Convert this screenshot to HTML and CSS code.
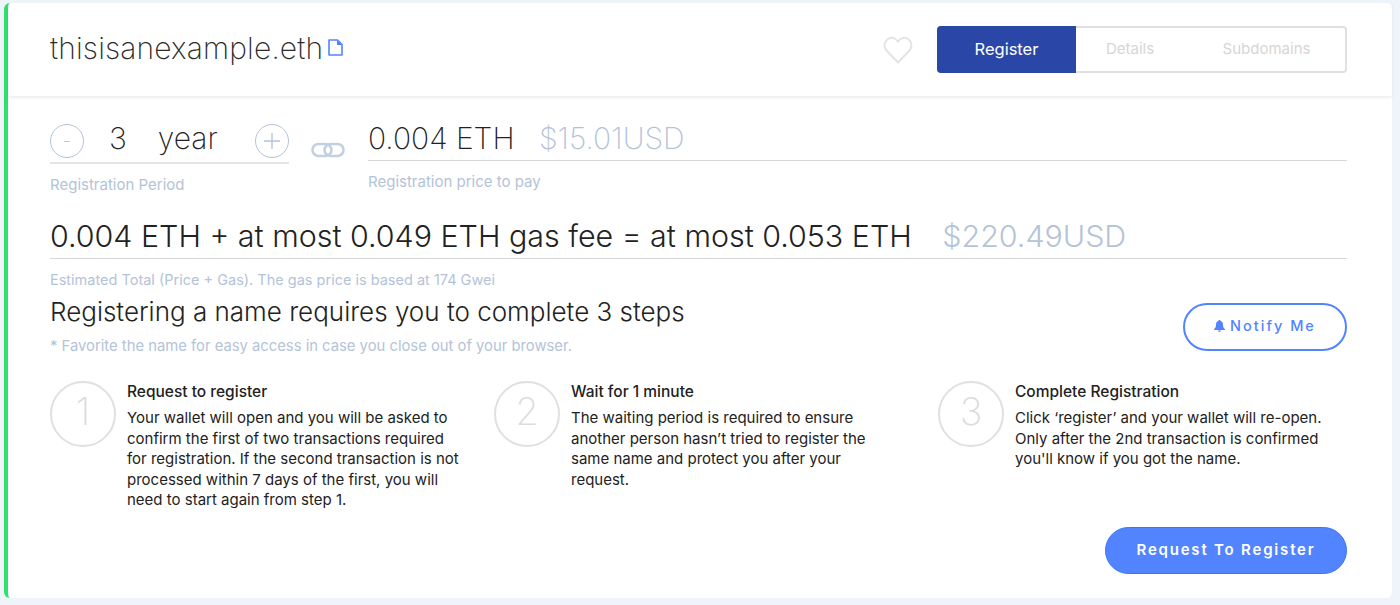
FILE: index.html
```html
<!DOCTYPE html>
<html lang="en">
<head>
    <meta charset="UTF-8">
    <meta name="viewport" content="width=device-width, initial-scale=1.0">
    <title>thisisanexample.eth</title>
    <link rel="stylesheet" href="styles.css">
</head>
<body>
    <div class="card">
        <!-- HEADER -->
        <div class="header">
            <h1 class="name">thisisanexample.eth</h1>
            <svg class="copy-icon" width="15" height="17" viewBox="0 0 15 17">
                <path d="M1 1H9.5L14 5.5V16H1Z" fill="none" stroke="#5284ff" stroke-width="1.6" stroke-linejoin="round"/>
                <path d="M9 1V6H14Z" fill="#5284ff"/>
            </svg>
            <svg class="heart-icon" width="30" height="28" viewBox="0 0 30 28">
                <path d="M15 26.5L3.5 14.5C0.5 11 1 6 4.5 3.2C8 0.8 12.5 1.6 15 5.6C17.5 1.6 22 0.8 25.5 3.2C29 6 29.5 11 26.5 14.5Z" fill="none" stroke="#e4e4e4" stroke-width="2" stroke-linejoin="round"/>
            </svg>
            <div class="tabs">
                <div class="tab active">Register</div>
                <div class="tab details">Details</div>
                <div class="tab subdomains">Subdomains</div>
            </div>
        </div>

        <div class="content">
            <!-- PERIOD AND PRICE -->
            <div class="price-row">
                <div class="period">
                    <div class="period-input">
                        <div class="round-btn minus">-</div>
                        <div class="years">3</div>
                        <div class="unit">year</div>
                        <div class="round-btn plus">
                            <svg width="18" height="18" viewBox="0 0 18 18"><path d="M9 1V17M1 9H17" stroke="#b4c3d8" stroke-width="1.3" fill="none"/></svg>
                        </div>
                    </div>
                    <div class="label">Registration Period</div>
                </div>
                <svg class="chain-icon" width="34" height="16" viewBox="0 0 34 16">
                    <rect x="1.5" y="2" width="19" height="12" rx="6" fill="none" stroke="#c3d0e2" stroke-width="2.6"/>
                    <rect x="13.5" y="2" width="19" height="12" rx="6" fill="none" stroke="#c3d0e2" stroke-width="2.6"/>
                </svg>
                <div class="price">
                    <div class="price-value">
                        <span class="eth">0.004 ETH</span>
                        <span class="usd">$15.01USD</span>
                    </div>
                    <div class="label">Registration price to pay</div>
                </div>
            </div>

            <!-- TOTAL -->
            <div class="total-value">
                <span class="total-eth">0.004 ETH + at most 0.049 ETH gas fee = at most 0.053 ETH</span>
                <span class="usd">$220.49USD</span>
            </div>
            <div class="label total-label">Estimated Total (Price + Gas). The gas price is based at 174 Gwei</div>

            <!-- STEPS -->
            <div class="steps-head">
                <div>
                    <h2 class="steps-title">Registering a name requires you to complete 3 steps</h2>
                    <p class="steps-note">* Favorite the name for easy access in case you close out of your browser.</p>
                </div>
                <div class="notify-btn">
                    <svg width="11" height="12" viewBox="0 0 11 12"><path d="M5.5 0C6.2 0 6.6.5 6.6 1.1C8.3 1.6 9 3 9 4.8C9 7 9.6 8 11 9.2V10H0V9.2C1.4 8 2 7 2 4.8C2 3 2.7 1.6 4.4 1.1C4.4.5 4.8 0 5.5 0ZM4 10.6H7C7 11.4 6.3 12 5.5 12C4.7 12 4 11.4 4 10.6Z" fill="#5284ff"/></svg>
                    Notify Me
                </div>
            </div>
            <div class="steps">
                <div class="step">
                    <div class="step-num">1</div>
                    <div class="step-body">
                        <h3 class="step-title">Request to register</h3>
                        <p class="step-text">Your wallet will open and you will be asked to<br>confirm the first of two transactions required<br>for registration. If the second transaction is not<br>processed within 7 days of the first, you will<br>need to start again from step 1.</p>
                    </div>
                </div>
                <div class="step">
                    <div class="step-num">2</div>
                    <div class="step-body">
                        <h3 class="step-title">Wait for 1 minute</h3>
                        <p class="step-text">The waiting period is required to ensure<br>another person hasn’t tried to register the<br>same name and protect you after your<br>request.</p>
                    </div>
                </div>
                <div class="step">
                    <div class="step-num">3</div>
                    <div class="step-body">
                        <h3 class="step-title">Complete Registration</h3>
                        <p class="step-text">Click ‘register’ and your wallet will re-open.<br>Only after the 2nd transaction is confirmed<br>you'll know if you got the name.</p>
                    </div>
                </div>
            </div>
            <div class="actions">
                <div class="register-btn">Request To Register</div>
            </div>
        </div>
    </div>
</body>
</html>
```

FILE: styles.css
```css
body {
    margin: 0;
    height: 605px;
    overflow: hidden;
    background-color: #eff4fa;
    font-family: "Inter", "Open Sans", sans-serif;
    color: #222;
}
h1, h2, h3, p {
    margin: 0;
    font-weight: normal;
}
.card {
    margin: 3px 8px 0 4px;
    width: 1388px;
    height: 595px;
    box-sizing: border-box;
    background-color: white;
    border-left: 4px solid #2fe06e;
    border-radius: 6px;
}
.header {
    display: flex;
    align-items: center;
    height: 93px;
    padding: 0 45px 0 42px;
    box-shadow: 0 2px 3px rgba(0,0,0,0.07);
}
.name {
    margin-bottom: 4px;
    font-size: 30px;
    font-weight: 200;
    letter-spacing: 0.15px;
    color: #2b2b2b;
}
.copy-icon {
    margin: 0 0 4px 5px;
}
.heart-icon {
    margin-left: auto;
    margin-right: 24px;
}
.tabs {
    display: flex;
    width: 410px;
    height: 47px;
    box-sizing: border-box;
    border: 2px solid #e0e0e0;
    border-radius: 4px;
    font-size: 15px;
    color: #d6d6d6;
}
.tab {
    flex: none;
    display: flex;
    align-items: center;
    justify-content: center;
    box-sizing: border-box;
    padding-bottom: 2px;
}
.tab.active {
    width: 139px;
    margin: -2px 0 -2px -2px;
    background-color: #2a47a7;
    border-radius: 4px 0 0 4px;
    font-size: 16.5px;
    color: white;
}
.tab.details {
    width: 108px;
}
.tab.subdomains {
    width: 161px;
    padding-left: 4px;
}
.content {
    padding: 0 45px 0 42px;
}
.price-row {
    display: flex;
    padding-top: 24px;
    height: 84px;
}
.period {
    width: 239px;
}
.period-input {
    display: flex;
    align-items: center;
    height: 42px;
    border-bottom: 2px solid #e4e4e4;
    font-size: 30px;
    font-weight: 200;
}
.round-btn {
    display: flex;
    align-items: center;
    justify-content: center;
    width: 34px;
    height: 34px;
    box-sizing: border-box;
    border: 1.5px solid #b4c3d8;
    border-radius: 50%;
    color: #b4c3d8;
    font-size: 20px;
}
.years {
    margin: 0 0 7px 25px;
}
.unit {
    margin: 0 0 7px 31px;
}
.plus {
    margin-left: auto;
}
.label {
    margin-top: 11px;
    font-size: 15px;
    color: #b4c3d8;
}
.chain-icon {
    margin: 22px 23px 0 22px;
}
.price {
    flex: 1;
}
.price-value {
    height: 40px;
    border-bottom: 1px solid #d8d8d8;
    font-size: 30px;
    font-weight: 200;
    line-height: 36px;
}
.usd {
    margin-left: 16px;
    color: #b4c3d8;
}
.total-value {
    height: 47px;
    margin-top: 7px;
    border-bottom: 1px solid #d8d8d8;
    font-size: 30.4px;
    font-weight: 300;
    line-height: 50px;
}
.total-value .usd {
    margin-left: 22px;
}
.total-label {
    margin-top: 12px;
    font-size: 14.5px;
}
.steps-head {
    display: flex;
    justify-content: space-between;
    margin-top: 8px;
}
.steps-title {
    font-size: 26px;
    font-weight: 300;
}
.steps-note {
    margin-top: 10px;
    font-size: 14.8px;
    color: #b4c3d8;
}
.notify-btn {
    display: flex;
    align-items: center;
    justify-content: center;
    gap: 5px;
    width: 164px;
    height: 48px;
    margin-top: 7px;
    padding-bottom: 3px;
    box-sizing: border-box;
    border: 2px solid #5284ff;
    border-radius: 24px;
    font-size: 14.5px;
    font-weight: 500;
    letter-spacing: 2px;
    color: #5284ff;
}
.steps {
    display: grid;
    grid-template-columns: 444px 444px 1fr;
    margin-top: 26px;
}
.step {
    display: flex;
}
.step-num {
    flex: none;
    display: flex;
    align-items: center;
    justify-content: center;
    width: 66px;
    height: 66px;
    margin-right: 11px;
    padding-bottom: 6px;
    box-sizing: border-box;
    border: 2px solid #e0e0e0;
    border-radius: 50%;
    font-size: 38px;
    font-weight: 200;
    color: #dcdcdc;
}
.step-body {
    padding-top: 1px;
}
.step-title {
    font-size: 15.5px;
    font-weight: 500;
    line-height: 20px;
}
.step-text {
    margin-top: 6px;
    font-size: 15px;
    line-height: 20.5px;
}
.actions {
    display: flex;
    justify-content: flex-end;
    margin-top: 16px;
}
.register-btn {
    display: flex;
    align-items: center;
    justify-content: center;
    width: 242px;
    height: 47px;
    padding-bottom: 2px;
    box-sizing: border-box;
    border: 1px solid #3f73f5;
    background-color: #5284ff;
    border-radius: 24px;
    font-size: 15px;
    font-weight: 600;
    letter-spacing: 1.8px;
    color: white;
}
```
